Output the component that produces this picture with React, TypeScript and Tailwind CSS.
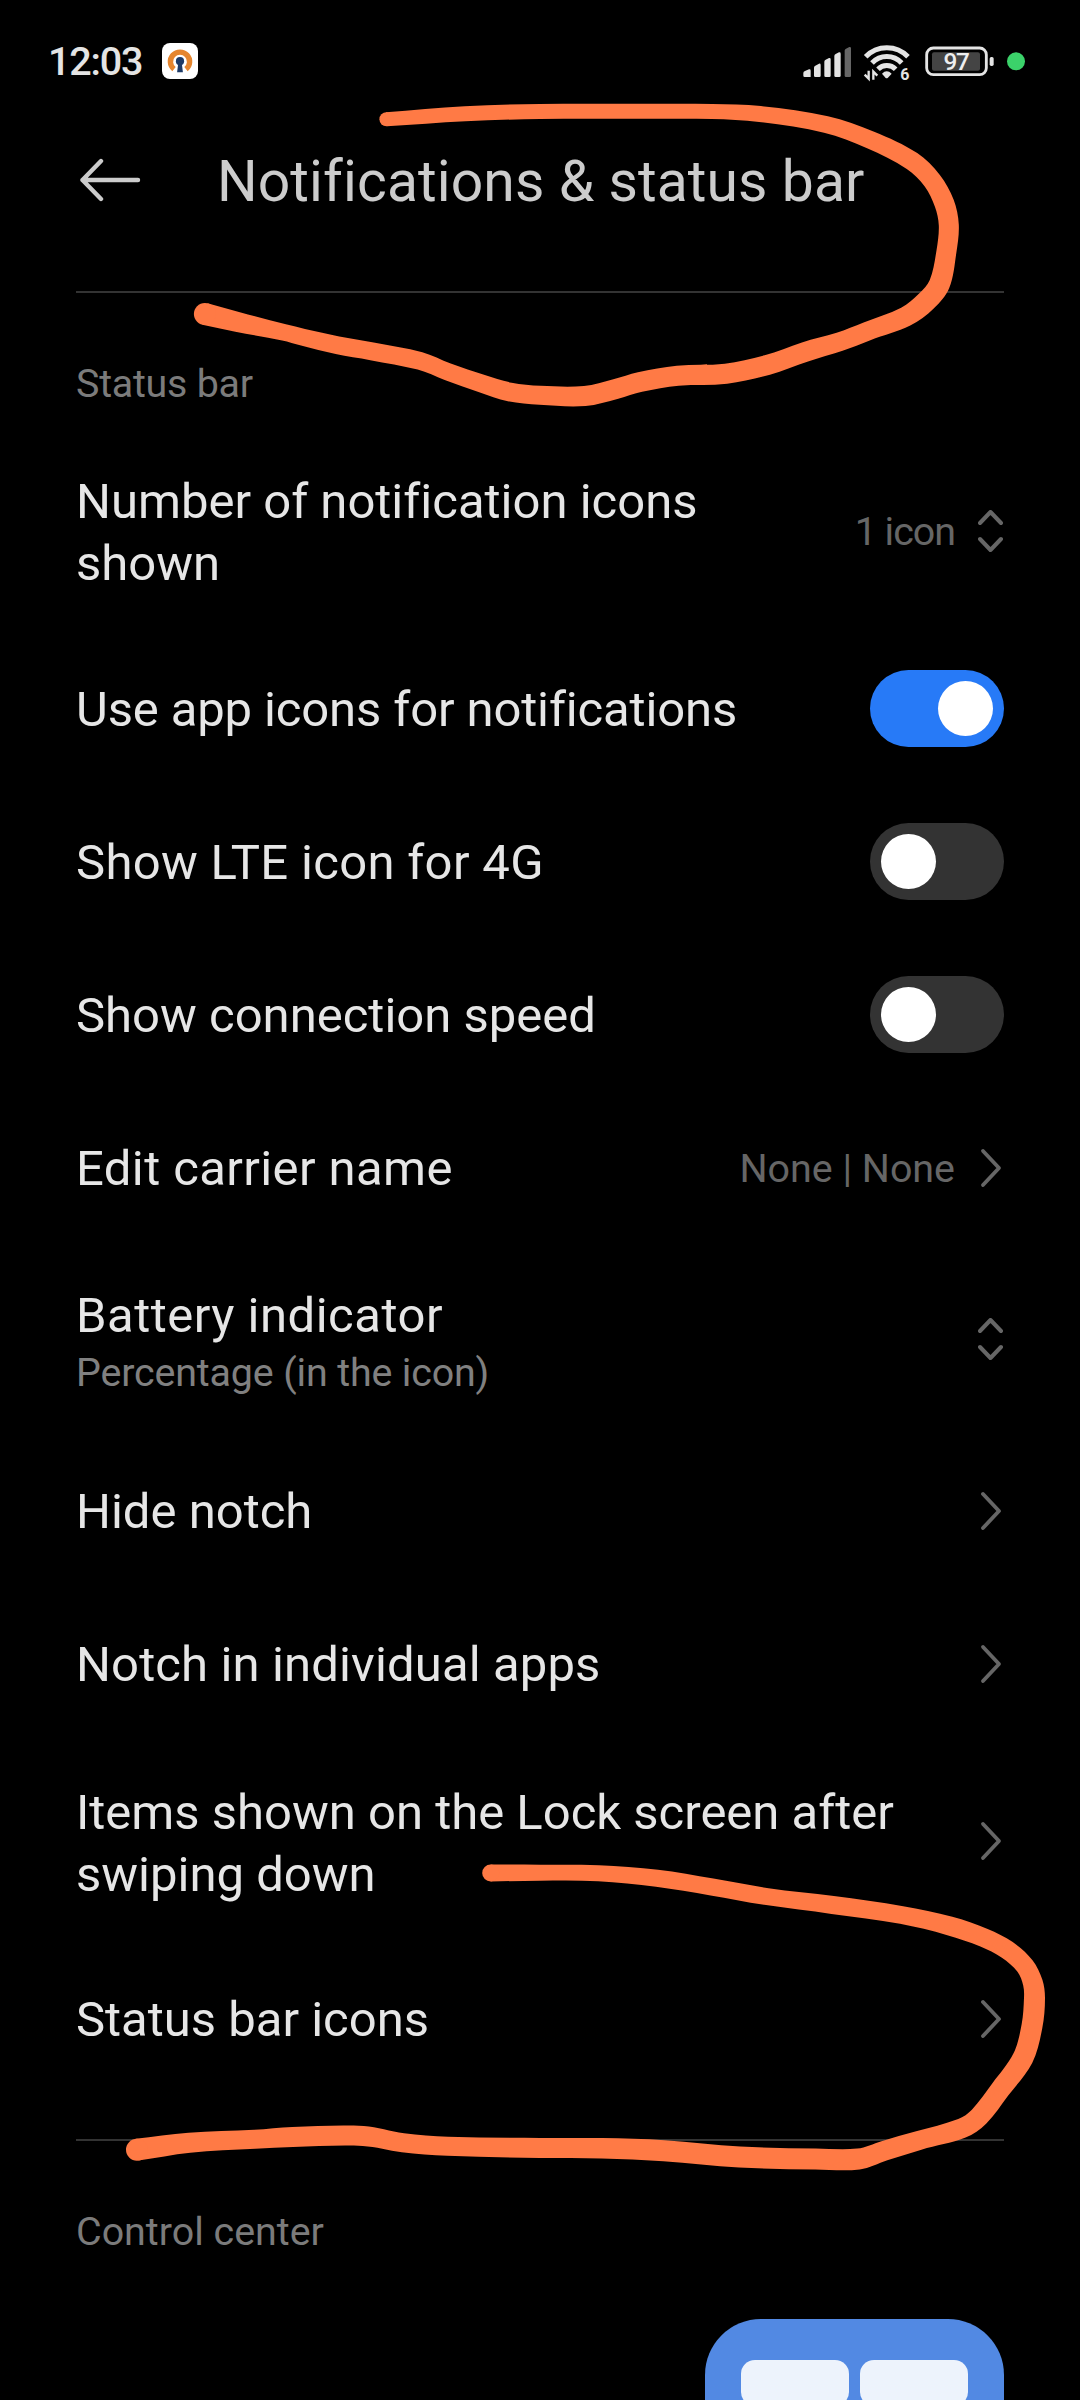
import { useState } from "react";
import type { ReactNode } from "react";

type StrokePoint = [x: number, y: number, width: number];

const HEADER_STROKE: StrokePoint[] = [
  [386.4, 119.3, 14], [465, 113.7, 15], [540, 111.5, 15], [640, 111.3, 15],
  [712, 111.5, 15], [760, 114, 16], [826, 124.5, 17], [870.6, 140, 18],
  [912, 161, 19], [932.3, 180.7, 19], [944.3, 203.3, 20], [948.8, 225, 20],
  [946.4, 251.7, 20], [939.5, 284, 21], [926.4, 301, 21], [905.7, 316.7, 20],
  [867, 331.3, 19], [839.6, 341.8, 19], [805, 351.9, 20], [767.3, 365, 20],
  [726, 373.7, 20], [677.7, 375.7, 20], [640, 382, 20], [615.8, 389, 20],
  [584.8, 396, 20], [540, 395.3, 19], [509.7, 392, 19], [482, 383.6, 18],
  [447.7, 371.7, 17.5], [420, 360.9, 18], [372, 351.3, 18], [337.5, 345.2, 18],
  [303, 337.2, 17], [284, 332.4, 16.5], [237.6, 322, 20], [204.9, 314, 22],
];

const ICONS_STROKE: StrokePoint[] = [
  [490.7, 1873, 17], [540, 1872.7, 16], [598.5, 1873.3, 16], [657, 1878.3, 17],
  [712, 1887, 17], [767.3, 1896.7, 17], [832.7, 1905, 18], [901.6, 1915, 18],
  [949.8, 1926, 19], [984, 1937.7, 19], [1007.3, 1949.9, 19], [1025, 1966, 19],
  [1032.8, 1982.7, 20], [1034.5, 1998, 21], [1032, 2026, 21],
  [1022.8, 2058.3, 21], [1000.4, 2089.3, 20], [979, 2116.7, 20],
  [961.9, 2128.3, 20], [918.8, 2140.5, 19], [884.4, 2150.7, 20],
  [858.5, 2159, 21], [815.5, 2159, 21], [739.7, 2157, 21], [664, 2150.7, 21],
  [602, 2148.3, 20.5], [540, 2148, 20], [447.7, 2146.3, 19],
  [402.9, 2142.7, 19], [363.3, 2136, 20], [292.7, 2137, 20],
  [254.8, 2139.3, 19], [189.4, 2142.7, 20], [137, 2149.7, 22],
];

function curveThrough(points: [number, number][]) {
  let d = "";
  for (let i = 0; i < points.length - 1; i++) {
    const before = points[Math.max(i - 1, 0)];
    const from = points[i];
    const to = points[i + 1];
    const after = points[Math.min(i + 2, points.length - 1)];
    // scale the tangents by segment length so short segments do not overshoot
    const length = Math.hypot(to[0] - from[0], to[1] - from[1]) / 3;
    const inLen = Math.hypot(to[0] - before[0], to[1] - before[1]) || 1;
    const outLen = Math.hypot(after[0] - from[0], after[1] - from[1]) || 1;
    const c1x = from[0] + ((to[0] - before[0]) / inLen) * length;
    const c1y = from[1] + ((to[1] - before[1]) / inLen) * length;
    const c2x = to[0] - ((after[0] - from[0]) / outLen) * length;
    const c2y = to[1] - ((after[1] - from[1]) / outLen) * length;
    d += `C${c1x} ${c1y} ${c2x} ${c2y} ${to[0]} ${to[1]}`;
  }
  return d;
}

function brushPath(points: StrokePoint[]) {
  const left: [number, number][] = [];
  const right: [number, number][] = [];
  points.forEach(([x, y, width], i) => {
    const a = points[Math.max(i - 1, 0)];
    const b = points[Math.min(i + 1, points.length - 1)];
    const len = Math.hypot(b[0] - a[0], b[1] - a[1]);
    const nx = (-(b[1] - a[1]) / len) * (width / 2);
    const ny = ((b[0] - a[0]) / len) * (width / 2);
    left.push([x + nx, y + ny]);
    right.unshift([x - nx, y - ny]);
  });
  return `M${left[0].join(" ")}${curveThrough(left)}L${right[0].join(" ")}${curveThrough(right)}Z`;
}

function BrushStroke({ points }: { points: StrokePoint[] }) {
  const ends = [points[0], points[points.length - 1]];
  return (
    <g fill="#ff7a45">
      <path d={brushPath(points)} />
      {ends.map(([x, y, width]) => (
        <circle key={x} cx={x} cy={y} r={width / 2} />
      ))}
    </g>
  );
}

function StatusBar() {
  return (
    <header className="flex h-[120px] shrink-0 items-start pt-[41px] pr-[54px] pl-[48px]">
      <span className="w-[114px] shrink-0 text-[39.5px] leading-[41px] font-medium tracking-[-1.2px] text-[#e4e4e4]">
        12:03
      </span>
      <svg className="mt-[2px] size-9 shrink-0" viewBox="0 0 36 36">
        <rect width="36" height="36" rx="8" fill="#fff" />
        <path
          d="M12 26.2A9.6 9.6 0 1 1 24 26.2"
          fill="none"
          stroke="#e5852e"
          strokeWidth="5.4"
        />
        <circle cx="18" cy="18.2" r="4.1" fill="#1d3a66" />
        <path d="M16.4 19h3.2l1.3 10.2h-5.8z" fill="#1d3a66" />
      </svg>

      <div className="ml-auto flex">
        <svg className="h-10 w-[50px]" viewBox="66 62 150 120" fill="#e4e4e4">
          <path d="M70 158q0-4 5-6l12-5q5-1 5 4v19H74q-4 0-4-4z" />
          <path d="M102 142q0-4 4-6l11-6q5-1 5 4v32q0 4-4 4h-12q-4 0-4-4z" />
          <path d="M133 124q0-4 4-6l10-5q5-1 5 4v49q0 4-4 4h-11q-4 0-4-4z" />
          <path d="M163 107q0-4 4-6l10-5q5-1 5 4v66q0 4-4 4h-11q-4 0-4-4z" />
          <path
            d="M194 91q0-4 4-6l10-5q5-1 5 4v82q0 4-4 4h-11q-4 0-4-4z"
            fill="#666"
          />
        </svg>
        <svg
          className="ml-[10px] h-10 w-[50px] overflow-visible"
          viewBox="246 62 150 120"
        >
          <g fill="none" stroke="#e4e4e4" strokeWidth="15">
            <path d="M257 109A88 88 0 0 1 384 109" />
            <path d="M276 128A61 61 0 0 1 365 128" />
            <path d="M294 147A37 37 0 0 1 347 147" />
          </g>
          <path d="M306 160q14-14 29 0l-12 13q-3 2-6 0z" fill="#e4e4e4" />
          <path
            d="M266 151v24l-12-12M280 178v-24l12 12"
            fill="none"
            stroke="#e4e4e4"
            strokeWidth="7"
          />
          <text x="361" y="178" fontSize="48" fontWeight="700" fill="#e4e4e4">
            6
          </text>
        </svg>
        <svg
          className="ml-[12px] h-10 w-[71px] overflow-visible"
          viewBox="432 62 213 120"
        >
          <rect
            x="440"
            y="83"
            width="179"
            height="80"
            rx="20"
            fill="none"
            stroke="#e4e4e4"
            strokeWidth="8.5"
          />
          <rect x="456" y="96" width="144" height="55" rx="6" fill="#444" />
          <rect x="629" y="110" width="12" height="27" rx="5" fill="#e4e4e4" />
          <text
            x="528"
            y="150"
            fontSize="73"
            fontWeight="500"
            textAnchor="middle"
            letterSpacing="-4"
            fill="#eee"
          >
            97
          </text>
        </svg>
        <svg className="ml-[11px] h-10 w-5" viewBox="678 62 60 120">
          <circle cx="708" cy="123" r="27" fill="#3bd26a" />
        </svg>
      </div>
    </header>
  );
}

function TitleBar() {
  return (
    <div className="flex h-[121px] shrink-0 items-center gap-[76px] pl-[79px]">
      <svg
        className="h-11 w-[62px] -translate-y-[1px]"
        viewBox="0 0 62 44"
        fill="none"
        stroke="#ccc"
        strokeWidth="4.4"
        strokeLinecap="round"
        strokeLinejoin="round"
      >
        <path d="M22 3 3.5 22 22 41M3.5 22H59" />
      </svg>
      <h1 className="pt-[2px] text-[57px] leading-[72px] tracking-[0.1px] whitespace-nowrap text-[#ccc]">
        Notifications &amp; status bar
      </h1>
    </div>
  );
}

function ChevronRight() {
  return (
    <svg
      className="h-[42px] w-[26px] shrink-0"
      viewBox="0 0 26 42"
      fill="none"
      stroke="#666"
      strokeWidth="3.8"
      strokeLinecap="round"
      strokeLinejoin="round"
    >
      <path d="m5 4 16 17L5 38" />
    </svg>
  );
}

function ChevronUpDown() {
  return (
    <svg
      className="h-[42px] w-[26px] shrink-0"
      viewBox="0 0 26 42"
      fill="none"
      stroke="#666"
      strokeWidth="4"
      strokeLinecap="round"
      strokeLinejoin="round"
    >
      <path d="M2 13 12.5 2 23 13M2 29l10.5 11L23 29" />
    </svg>
  );
}

function Toggle({ label, defaultOn }: { label: string; defaultOn?: boolean }) {
  const [on, setOn] = useState(Boolean(defaultOn));
  return (
    <button
      type="button"
      role="switch"
      aria-checked={on}
      aria-label={label}
      onClick={() => setOn(!on)}
      className={
        on
          ? "flex h-[77px] w-[134px] items-center justify-end rounded-full bg-[#277af7] px-[11px]"
          : "flex h-[77px] w-[134px] items-center justify-start rounded-full bg-[#333] px-[11px]"
      }
    >
      <span className="size-[55px] rounded-full bg-white" />
    </button>
  );
}

interface RowProps {
  title: ReactNode;
  summary?: string;
  value?: string;
  valueTracking?: string;
  height?: string;
  tracking?: string;
  textPadding?: string;
  control: ReactNode;
}

function Row({
  title,
  summary,
  value,
  valueTracking = "tracking-normal",
  height = "h-[153px]",
  tracking = "tracking-normal",
  textPadding = "pt-[2px]",
  control,
}: RowProps) {
  return (
    <li className={`flex items-center ${height}`}>
      <div className={`flex-1 whitespace-nowrap ${textPadding}`}>
        <p className={`text-[49px] leading-[62px] text-[#e6e6e6] ${tracking}`}>
          {title}
        </p>
        {summary && (
          <p className="text-[39.4px] leading-[52px] tracking-[-0.15px] text-[#808080]">
            {summary}
          </p>
        )}
      </div>
      {value && (
        <span
          className={`mr-[23px] pt-[2px] text-[39.4px] text-[#666] ${valueTracking}`}
        >
          {value}
        </span>
      )}
      {control}
    </li>
  );
}

export default function App() {
  return (
    <div className="relative flex h-[2400px] w-[1080px] flex-col overflow-hidden bg-black font-['Roboto',sans-serif] [font-variant-ligatures:none]">
      <StatusBar />
      <TitleBar />

      <main className="shrink-0 px-[76px] pt-[50px]">
        <section className="border-t-2 border-[#333]">
          <h2 className="h-[137px] pt-[65px] text-[39.4px] leading-[52px] tracking-[-0.25px] text-[#7b7b7b]">
            Status bar
          </h2>
          <ul>
            <Row
              title={
                <>
                  Number of notification icons
                  <br />
                  shown
                </>
              }
              value="1 icon"
              valueTracking="tracking-[-1px]"
              height="h-[202px]"
              textPadding="pt-[4px]"
              control={<ChevronUpDown />}
            />
            <Row
              title="Use app icons for notifications"
              tracking="tracking-[-0.13px]"
              control={<Toggle label="Use app icons for notifications" defaultOn />}
            />
            <Row
              title="Show LTE icon for 4G"
              tracking="tracking-[0.32px]"
              control={<Toggle label="Show LTE icon for 4G" />}
            />
            <Row
              title="Show connection speed"
              control={<Toggle label="Show connection speed" />}
            />
            <Row
              title="Edit carrier name"
              tracking="tracking-[0.4px]"
              value="None | None"
              control={<ChevronRight />}
            />
            <Row
              title="Battery indicator"
              tracking="tracking-[0.5px]"
              summary="Percentage (in the icon)"
              height="h-[190px]"
              textPadding="pt-[6px]"
              control={<ChevronUpDown />}
            />
            <Row title="Hide notch" control={<ChevronRight />} />
            <Row
              title="Notch in individual apps"
              tracking="tracking-[0.13px]"
              control={<ChevronRight />}
            />
            <Row
              title={
                <>
                  Items shown on the Lock screen after
                  <br />
                  swiping down
                </>
              }
              height="h-[202px]"
              textPadding="pt-[5px]"
              control={<ChevronRight />}
            />
            <Row title="Status bar icons" control={<ChevronRight />} />
          </ul>
        </section>

        <section className="mt-[44px] border-t-2 border-[#333]">
          <h2 className="pt-[65px] text-[39.4px] leading-[52px] text-[#7b7b7b]">
            Control center
          </h2>
          <div className="mt-[61px] ml-auto flex h-[400px] w-[299px] gap-[11px] rounded-[56px] bg-[#5289e3] px-[36px] pt-[41px]">
            <span className="h-[46px] flex-1 rounded-[14px] bg-[#edf3fc]" />
            <span className="h-[46px] flex-1 rounded-[14px] bg-[#edf3fc]" />
          </div>
        </section>
      </main>

      <svg
        className="pointer-events-none absolute inset-0"
        width="1080"
        height="2400"
        viewBox="0 0 1080 2400"
      >
        <BrushStroke points={HEADER_STROKE} />
        <BrushStroke points={ICONS_STROKE} />
      </svg>
    </div>
  );
}
